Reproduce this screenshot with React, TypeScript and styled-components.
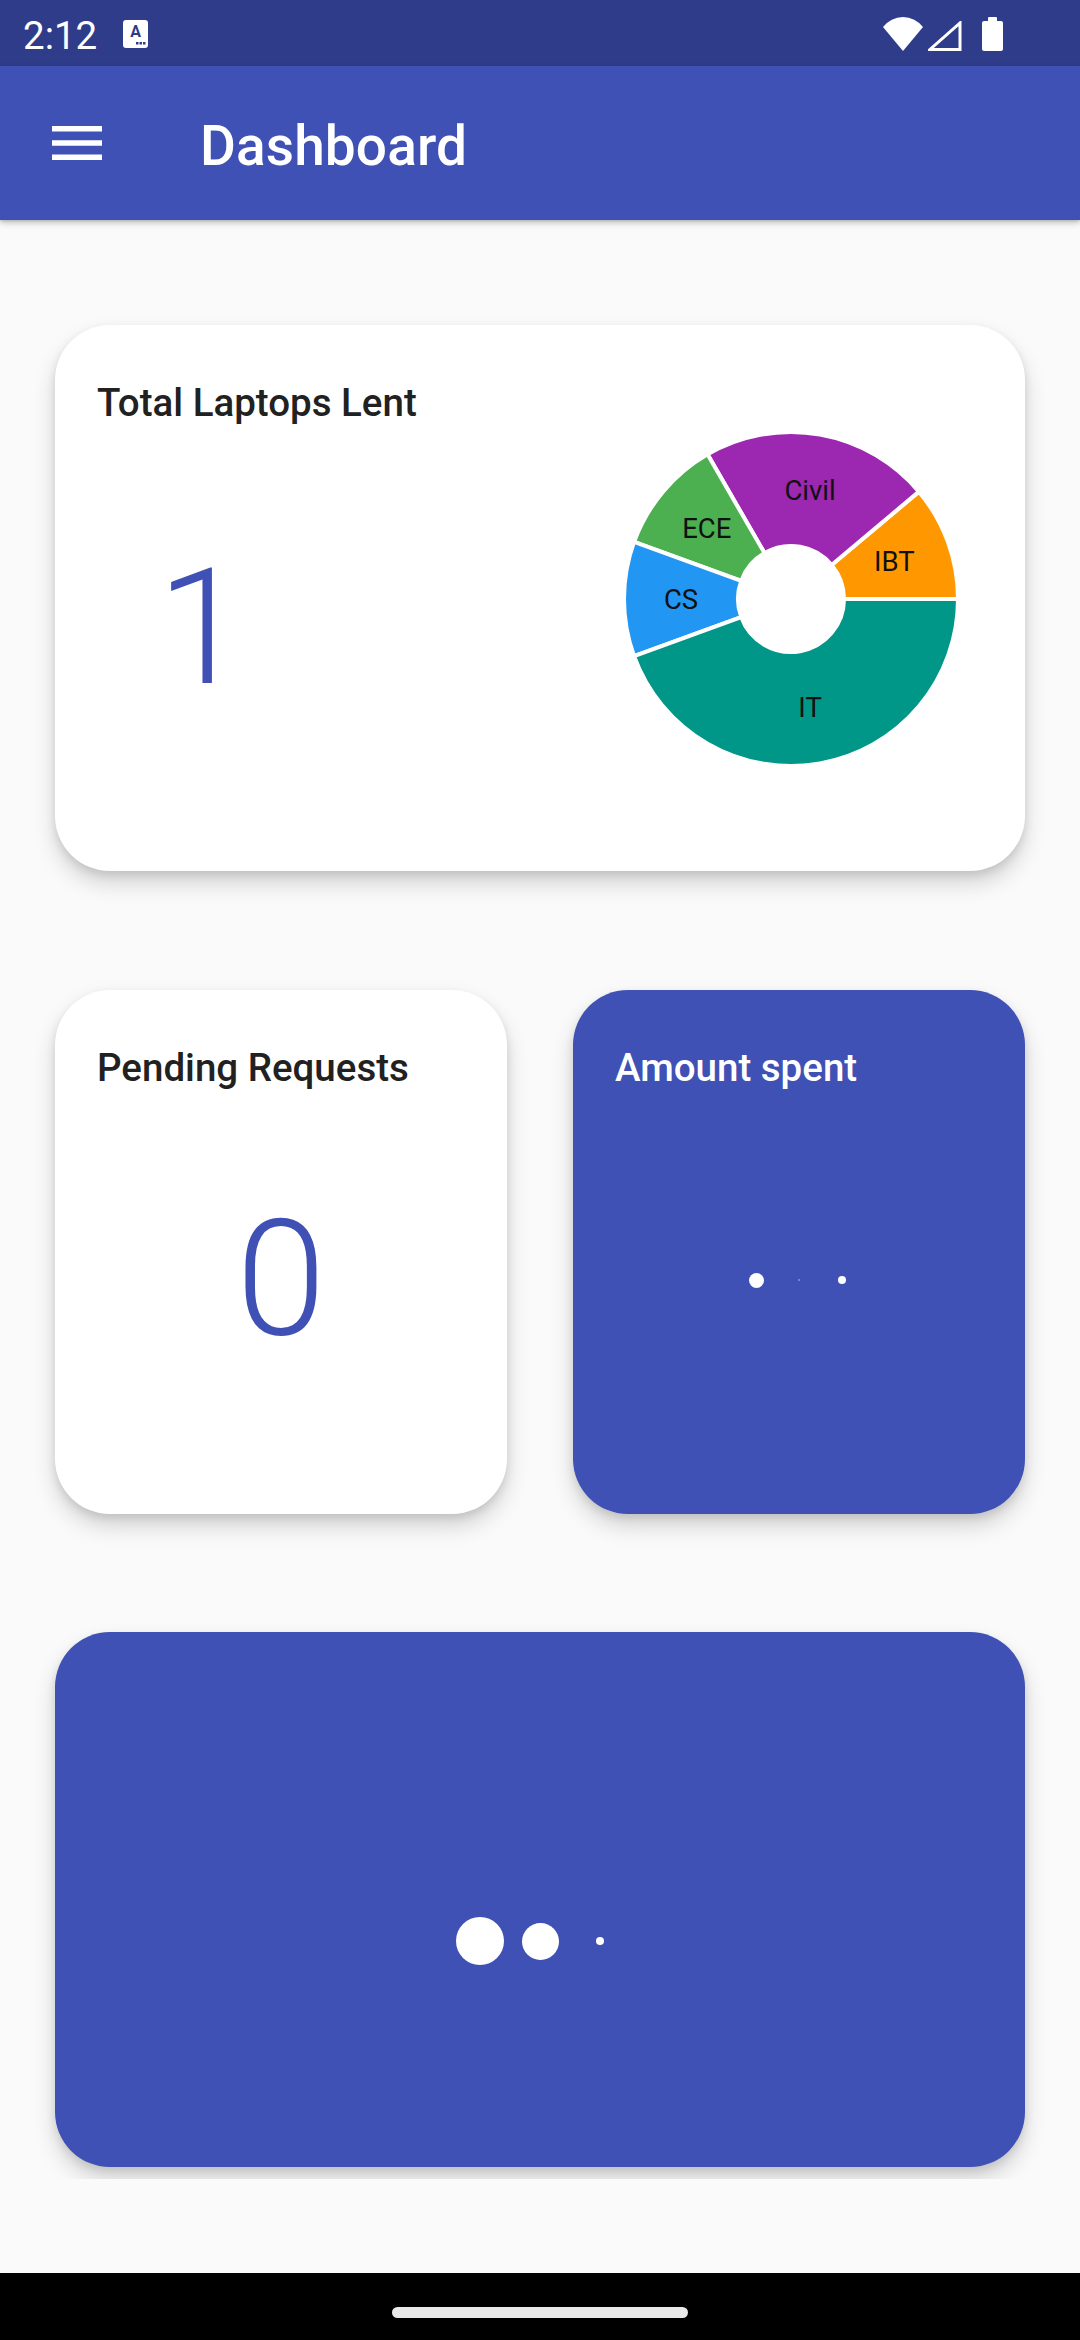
import React from "react";
import styled, { createGlobalStyle } from "styled-components";

const GlobalStyle = createGlobalStyle`
  html, body { margin: 0; padding: 0; background: #fafafa; }
  body { font-family: Roboto, "Noto Sans", "Liberation Sans", sans-serif; }
  * { box-sizing: border-box; }
`;

const INDIGO = "#3F51B5";

const Screen = styled.div`
  width: 1080px;
  height: 2340px;
  display: flex;
  flex-direction: column;
  overflow: hidden;
  background: #fafafa;
`;

const StatusBar = styled.div`
  height: 66px;
  flex: none;
  background: #2f3c8a;
  display: flex;
  align-items: center;
  padding: 2px 77px 0 23px;
  color: #fff;
`;

const Clock = styled.span`
  font-size: 38.5px;
  font-weight: 400;
  line-height: 45px;
  padding-top: 2px;
`;

const StatusGlyph = styled.svg<{ $ml?: number }>`
  display: block;
  margin-left: ${(p) => p.$ml ?? 0}px;
  flex: none;
`;

const Spacer = styled.div`
  flex: 1;
`;

const AppBar = styled.header`
  height: 154px;
  flex: none;
  background: ${INDIGO};
  display: flex;
  align-items: center;
  padding-left: 52px;
  position: relative;
  z-index: 1;
  box-shadow: 0 3px 6px rgba(0, 0, 0, 0.22), 0 1px 2px rgba(0, 0, 0, 0.12);
`;

const Title = styled.h1`
  margin: 6px 0 0 98px;
  font-size: 55px;
  font-weight: 500;
  line-height: 64px;
  color: #fff;
  letter-spacing: 0.1px;
`;

const Main = styled.main`
  flex: 1;
  background: #fafafa;
  overflow: hidden;
`;

const Scroll = styled.div`
  padding: 105px 55px 12px;
  overflow: hidden;
  display: flex;
  flex-direction: column;
`;

const Card = styled.section<{ $h: number; $dark?: boolean; $mt?: number }>`
  height: ${(p) => p.$h}px;
  margin-top: ${(p) => p.$mt ?? 0}px;
  border-radius: 55px;
  background: ${(p) => (p.$dark ? INDIGO : "#fff")};
  box-shadow: 0 12px 22px rgba(0, 0, 0, 0.16), 0 4px 8px rgba(0, 0, 0, 0.1);
  flex: none;
  display: flex;
  flex-direction: column;
  padding-top: 55px;
`;

const WideCard = styled(Card)`
  flex-direction: row;
  padding-top: 0;
`;

const LeftCol = styled.div`
  flex: 1;
  padding-top: 55px;
  display: flex;
  flex-direction: column;
`;

const CardTitle = styled.h2<{ $light?: boolean }>`
  margin: 0 42px;
  font-size: 38.5px;
  font-weight: 500;
  line-height: 46px;
  color: ${(p) => (p.$light ? "#fff" : "#212121")};
`;

const BigNumber = styled.div<{ $w?: number; $mt: number }>`
  width: ${(p) => (p.$w ? `${p.$w}px` : "auto")};
  margin-top: ${(p) => p.$mt}px;
  font-size: 162px;
  font-weight: 300;
  line-height: 200px;
  color: ${INDIGO};
  text-align: center;
`;

const PieBox = styled.div`
  align-self: center;
  margin: 5px 64px 0 0;
  flex: none;
`;

const Row = styled.div`
  display: grid;
  grid-template-columns: 1fr 1fr;
  gap: 66px;
  margin-top: 119px;
`;

const DotRow = styled.div<{ $h: number; $mt: number }>`
  display: flex;
  justify-content: center;
  align-items: center;
  height: ${(p) => p.$h}px;
  margin-top: ${(p) => p.$mt}px;
`;

const DotSlot = styled.div<{ $w: number }>`
  width: ${(p) => p.$w}px;
  display: flex;
  justify-content: center;
  align-items: center;
`;

const Dot = styled.span<{ $s: number; $o?: number }>`
  display: block;
  width: ${(p) => p.$s}px;
  height: ${(p) => p.$s}px;
  border-radius: 50%;
  background: #fff;
  opacity: ${(p) => p.$o ?? 1};
`;

const NavBar = styled.div`
  height: 67px;
  flex: none;
  background: #000;
  display: flex;
  justify-content: center;
  padding-top: 34px;
`;

const Handle = styled.div`
  width: 296px;
  height: 11px;
  border-radius: 6px;
  background: #eaeaea;
`;

const slices = [
  { label: "IBT", value: 1, color: "#FF9800" },
  { label: "Civil", value: 2, color: "#9C27B0" },
  { label: "ECE", value: 1, color: "#4CAF50" },
  { label: "CS", value: 1, color: "#2196F3" },
  { label: "IT", value: 4, color: "#009688" },
];

function Pie() {
  const C = 170;
  const R = 167;
  const r = 53;
  const LR = 110;
  const total = slices.reduce((s, x) => s + x.value, 0);
  const pt = (rad: number, deg: number) => {
    const a = (deg * Math.PI) / 180;
    return [C + rad * Math.cos(a), C - rad * Math.sin(a)];
  };
  let acc = 0;
  const parts = slices.map((s) => {
    const a1 = acc;
    const a2 = acc + (s.value / total) * 360;
    acc = a2;
    const large = a2 - a1 > 180 ? 1 : 0;
    const [ox1, oy1] = pt(R, a1);
    const [ox2, oy2] = pt(R, a2);
    const [ix2, iy2] = pt(r, a2);
    const [ix1, iy1] = pt(r, a1);
    const d = `M${ox1} ${oy1} A${R} ${R} 0 ${large} 0 ${ox2} ${oy2} L${ix2} ${iy2} A${r} ${r} 0 ${large} 1 ${ix1} ${iy1} Z`;
    const [lx, ly] = pt(LR, (a1 + a2) / 2);
    return { ...s, d, lx, ly };
  });
  return (
    <svg width="340" height="340" viewBox="0 0 340 340">
      {parts.map((p) => (
        <path key={p.label} d={p.d} fill={p.color} stroke="#fff" strokeWidth={4} strokeLinejoin="round" />
      ))}
      {parts.map((p) => (
        <text
          key={p.label + "t"}
          x={p.lx}
          y={p.ly}
          textAnchor="middle"
          dominantBaseline="central"
          fontFamily="Roboto, sans-serif"
          fontSize="27.5"
          fill="#111"
        >
          {p.label}
        </text>
      ))}
    </svg>
  );
}

function Loader({
  dots,
  slot,
  h,
  mt,
}: {
  dots: { s: number; o?: number }[];
  slot: number;
  h: number;
  mt: number;
}) {
  return (
    <DotRow $h={h} $mt={mt}>
      {dots.map((d, i) => (
        <DotSlot key={i} $w={slot}>
          <Dot $s={d.s} $o={d.o} />
        </DotSlot>
      ))}
    </DotRow>
  );
}

export default function App() {
  return (
    <>
      <GlobalStyle />
      <Screen>
        <StatusBar>
          <Clock>2:12</Clock>
          <StatusGlyph $ml={26} width="25" height="28" viewBox="0 0 25 28">
            <rect x="0" y="0" width="25" height="28" rx="3" fill="#fff" />
            <text x="12.5" y="17" textAnchor="middle" fontFamily="Roboto, sans-serif" fontWeight="700" fontSize="16" fill="#2f3c8a">
              A
            </text>
            <rect x="13" y="22" width="2.5" height="2.5" fill="#2f3c8a" />
            <rect x="16.5" y="22" width="2.5" height="2.5" fill="#2f3c8a" />
            <rect x="20" y="22" width="2.5" height="2.5" fill="#2f3c8a" />
          </StatusGlyph>
          <Spacer />
          <StatusGlyph width="40" height="34" viewBox="0 0 40 34">
            <path d="M20 34 L0 10 A25 25 0 0 1 40 10 Z" fill="#fff" />
          </StatusGlyph>
          <StatusGlyph $ml={5} width="34" height="30" viewBox="0 0 34 30" style={{ marginTop: 4 }}>
            <path d="M32 2 L32 28.5 L2 28.5 Z" fill="none" stroke="#fff" strokeWidth="3" strokeLinejoin="miter" />
          </StatusGlyph>
          <StatusGlyph $ml={20} width="21" height="34" viewBox="0 0 21 34">
            <rect x="6" y="0" width="9" height="5" rx="1" fill="#fff" />
            <rect x="0" y="4" width="21" height="30" rx="2" fill="#fff" />
          </StatusGlyph>
        </StatusBar>
        <AppBar>
          <svg width="50" height="34" viewBox="0 0 50 34">
            <rect x="0" y="0" width="50" height="5.5" fill="#fff" />
            <rect x="0" y="14.25" width="50" height="5.5" fill="#fff" />
            <rect x="0" y="28.5" width="50" height="5.5" fill="#fff" />
          </svg>
          <Title>Dashboard</Title>
        </AppBar>
        <Main>
          <Scroll>
            <WideCard $h={546}>
              <LeftCol>
                <CardTitle>Total Laptops Lent</CardTitle>
                <BigNumber $w={294} $mt={102}>1</BigNumber>
              </LeftCol>
              <PieBox>
                <Pie />
              </PieBox>
            </WideCard>
            <Row>
              <Card $h={524}>
                <CardTitle>Pending Requests</CardTitle>
                <BigNumber $mt={88}>0</BigNumber>
              </Card>
              <Card $h={524} $dark>
                <CardTitle $light>Amount spent</CardTitle>
                <Loader dots={[{ s: 15 }, { s: 2, o: 0.4 }, { s: 8 }]} slot={43} h={20} mt={179} />
              </Card>
            </Row>
            <Card $h={535} $dark $mt={118}>
              <Loader dots={[{ s: 48 }, { s: 37 }, { s: 8 }]} slot={60} h={60} mt={224} />
            </Card>
          </Scroll>
        </Main>
        <NavBar>
          <Handle />
        </NavBar>
      </Screen>
    </>
  );
}
